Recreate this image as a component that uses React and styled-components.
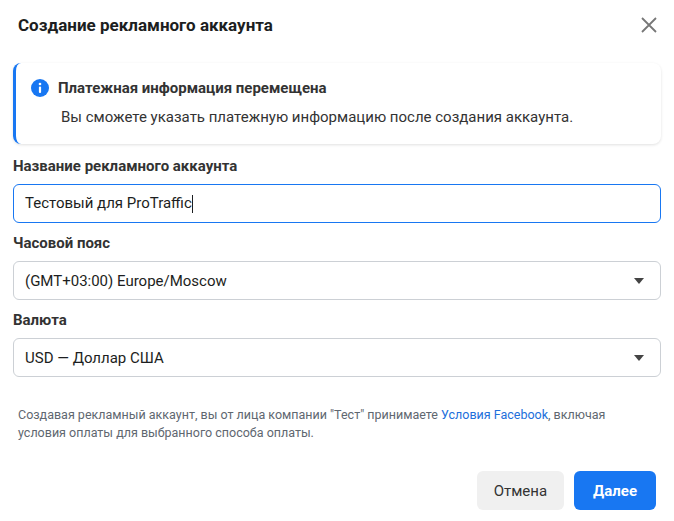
import React from "react";
import styled, { createGlobalStyle } from "styled-components";

const Global = createGlobalStyle`
  body { margin: 0; background: #fff; font-family: Roboto, "Liberation Sans", sans-serif; color: #1c1e21; }
`;
const Dialog = styled.div`width: 674px; height: 521px; box-sizing: border-box; padding: 0 13px 0 13px; display: flex; flex-direction: column;`;
const Header = styled.div`display: flex; justify-content: space-between; align-items: center; height: 50px; padding: 0 4px 0 5px;`;
const Title = styled.h1`margin: 0; font-size: 17px; font-weight: 700; color: #1c1e21;`;
const Close = styled.button`border: 0; background: none; padding: 0; cursor: pointer; display: flex;`;
const Info = styled.div`margin-top: 13px; height: 81px; box-sizing: border-box; border-radius: 8px; border-left: 3px solid #1877f2; box-shadow: 0 1px 3px rgba(0,0,0,0.12); padding: 16px 16px 0 15px;`;
const InfoHead = styled.div`display: flex; align-items: center; gap: 9px; font-size: 15px; font-weight: 700; color: #333;`;
const InfoBody = styled.div`margin: 11px 0 0 30px; font-size: 15px; color: #333;`;
const Label = styled.div`font-size: 15px; font-weight: 700; color: #333; margin-top: ${p => p.$top}px; margin-bottom: 9px;`;
const Field = styled.div`height: 39px; box-sizing: border-box; border: 1px solid ${p => p.$focus ? "#1877f2" : "#ccd0d5"}; border-radius: 6px; display: flex; align-items: center; justify-content: space-between; padding: 0 16px 0 11px; font-size: 15px; color: #1c1e21;`;
const Caret = styled.span`width: 1px; height: 18px; background: #1c1e21; display: inline-block; vertical-align: middle;`;
const Arrow = styled.span`width: 0; height: 0; border-left: 5px solid transparent; border-right: 5px solid transparent; border-top: 6px solid #444;`;
const Terms = styled.p`margin: 29px 0 0 5px; max-width: 605px; font-size: 12.5px; line-height: 18px; color: #606770;`;
const Link = styled.a`color: #216fdb; text-decoration: none;`;
const Footer = styled.div`display: flex; justify-content: flex-end; gap: 10px; margin-top: 29px; padding-right: 5px;`;
const Btn = styled.button`height: 39px; border: 0; border-radius: 6px; font-family: inherit; font-size: 15px; padding: 0 ${p => p.$primary ? 19 : 17}px; background: ${p => p.$primary ? "#1877f2" : "#f0f0f0"}; color: ${p => p.$primary ? "#fff" : "#333"}; font-weight: ${p => p.$primary ? 700 : 400};`;

export default function App() {
  return (
    <>
      <Global />
      <Dialog>
        <Header>
          <Title>Создание рекламного аккаунта</Title>
          <Close>
            <svg width="16" height="16" viewBox="0 0 16 16"><path d="M1 1L15 15M15 1L1 15" stroke="#777" strokeWidth="1.8" /></svg>
          </Close>
        </Header>
        <Info>
          <InfoHead>
            <svg width="18" height="18" viewBox="0 0 18 18">
              <circle cx="9" cy="9" r="9" fill="#1877f2" />
              <circle cx="9" cy="5" r="1.3" fill="#fff" />
              <rect x="7.9" y="7.5" width="2.2" height="6.5" rx="1" fill="#fff" />
            </svg>
            Платежная информация перемещена
          </InfoHead>
          <InfoBody>Вы сможете указать платежную информацию после создания аккаунта.</InfoBody>
        </Info>
        <Label $top={13}>Название рекламного аккаунта</Label>
        <Field $focus><span>Тестовый для ProTraffic<Caret /></span></Field>
        <Label $top={11}>Часовой пояс</Label>
        <Field><span>(GMT+03:00) Europe/Moscow</span><Arrow /></Field>
        <Label $top={11}>Валюта</Label>
        <Field><span>USD — Доллар США</span><Arrow /></Field>
        <Terms>
          Создавая рекламный аккаунт, вы от лица компании "Тест" принимаете <Link>Условия Facebook</Link>, включая условия оплаты для выбранного способа оплаты.
        </Terms>
        <Footer>
          <Btn>Отмена</Btn>
          <Btn $primary>Далее</Btn>
        </Footer>
      </Dialog>
    </>
  );
}
